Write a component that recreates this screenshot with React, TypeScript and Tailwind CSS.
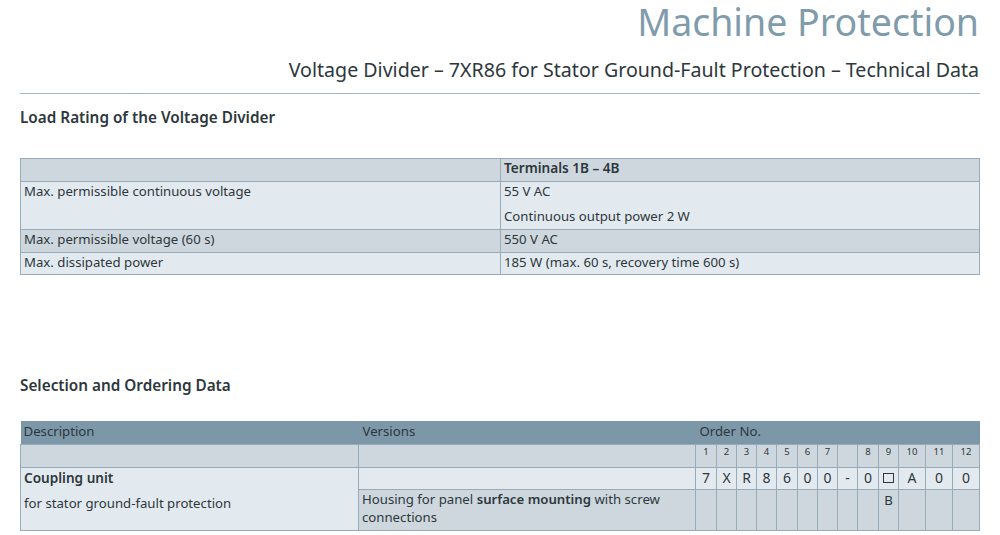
const ORDER_NUMBERS = ['1', '2', '3', '4', '5', '6', '7', '', '8', '9', '10', '11', '12'];
const ORDER_CODE = ['7', 'X', 'R', '8', '6', '0', '0', '-', '0', '□', 'A', '0', '0'];
const ORDER_WIDTHS = ['w-[21px]', 'w-[20px]', 'w-[20px]', 'w-[20px]', 'w-[21px]', 'w-[20px]', 'w-[20px]', 'w-[20px]', 'w-[21px]', 'w-[20px]', 'w-[27px]', 'w-[27px]', 'w-[27px]'];

const cell = 'border border-[#97abb8] pl-[3px] pr-1 align-top text-left font-normal';
const orderCell = 'border border-[#97abb8] text-center align-top';

export default function App() {
  return (
    <div className="h-[535px] w-[1000px] overflow-hidden bg-white px-5 font-['Noto_Sans',sans-serif] text-[13.2px] leading-[20px] text-[#2d373c]">
      <h1 className="pt-[1px] pr-px text-right text-[37.5px] leading-[42px] font-normal text-[#7f9cac]">Machine Protection</h1>
      <h2 className="mt-[13px] pr-px text-right text-[19.6px] leading-[28px] font-normal text-[#2d373c]">
        Voltage Divider – 7XR86 for Stator Ground-Fault Protection – Technical Data
      </h2>
      <div className="mt-[9px] h-px bg-[#a3b5c0]" />
      <h3 className="mt-[12px] text-[15.3px] leading-[22px] font-semibold">Load Rating of the Voltage Divider</h3>

      <table className="mt-[30px] w-[959px] table-fixed border-collapse">
        <colgroup>
          <col className="w-[480px]" />
          <col className="w-[479px]" />
        </colgroup>
        <tbody className="leading-[18px]">
          <tr className="h-[23px] bg-[#cdd7dd]">
            <th className={cell} />
            <th className={`${cell} text-[13.6px] font-semibold`}>Terminals 1B – 4B</th>
          </tr>
          <tr className="h-[48px] bg-[#e3eaef]">
            <td className={cell}>Max. permissible continuous voltage</td>
            <td className={cell}>
              <p>55 V AC</p>
              <p className="mt-[7px]">Continuous output power 2 W</p>
            </td>
          </tr>
          <tr className="h-[23px] bg-[#cdd7dd]">
            <td className={cell}>Max. permissible voltage (60 s)</td>
            <td className={cell}>550 V AC</td>
          </tr>
          <tr className="h-[22px] bg-[#e3eaef]">
            <td className={cell}>Max. dissipated power</td>
            <td className={cell}>185 W (max. 60 s, recovery time 600 s)</td>
          </tr>
        </tbody>
      </table>

      <h3 className="mt-[99px] text-[15.3px] leading-[22px] font-semibold">Selection and Ordering Data</h3>

      <table className="mt-[25px] w-[959px] table-fixed border-collapse">
        <colgroup>
          <col className="w-[338px]" />
          <col className="w-[337px]" />
          {ORDER_WIDTHS.map((w, i) => (
            <col key={i} className={w} />
          ))}
        </colgroup>
        <tbody>
          <tr className="h-[23px] bg-[#7c98a8]">
            <th className="pl-[3px] text-left align-top font-normal">Description</th>
            <th className="pl-[4px] text-left align-top font-normal">Versions</th>
            <th colSpan={13} className="pl-[4px] text-left align-top font-normal">Order No.</th>
          </tr>
          <tr className="h-[23px] bg-[#cdd7dd]">
            <td className={cell} />
            <td className={cell} />
            {ORDER_NUMBERS.map((n, i) => (
              <td key={i} className={`${orderCell} text-[9.5px] leading-[14px]`}>{n}</td>
            ))}
          </tr>
          <tr className="h-[22px] bg-[#e3eaef]">
            <td rowSpan={2} className={cell}>
              <p className="text-[13.6px] font-semibold">Coupling unit</p>
              <p className="mt-[5px]">for stator ground-fault protection</p>
            </td>
            <td className={cell} />
            {ORDER_CODE.map((c, i) => (
              <td key={i} className={`${orderCell} text-[14px]`}>
                {c === '□' ? <span className="inline-block h-[10px] w-[11px] border border-[#2d373c]" /> : c}
              </td>
            ))}
          </tr>
          <tr className="h-[41px] bg-[#cdd7dd]">
            <td className={`${cell} leading-[18px]`}>
              Housing for panel <b className="font-semibold">surface mounting</b> with screw connections
            </td>
            {ORDER_CODE.map((_, i) => (
              <td key={i} className={`${orderCell} leading-[21px]`}>{i === 9 ? 'B' : ''}</td>
            ))}
          </tr>
        </tbody>
      </table>
    </div>
  );
}
